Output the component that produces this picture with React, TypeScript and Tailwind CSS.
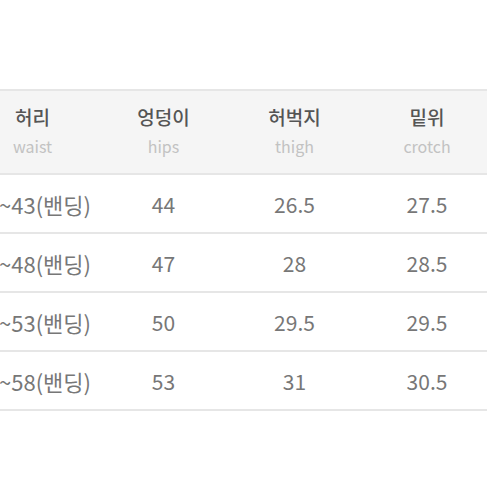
import React from "react";

const cols = [
  { ko: "허리", en: "waist" },
  { ko: "엉덩이", en: "hips" },
  { ko: "허벅지", en: "thigh" },
  { ko: "밑위", en: "crotch" },
];

const rows = [
  ["27~43(밴딩)", "44", "26.5", "27.5"],
  ["32~48(밴딩)", "47", "28", "28.5"],
  ["37~53(밴딩)", "50", "29.5", "29.5"],
  ["42~58(밴딩)", "53", "31", "30.5"],
];

export default function App() {
  return (
    <div
      className="w-[487px] h-[487px] overflow-hidden bg-white"
      style={{ fontFamily: '"Noto Sans CJK KR", "Noto Sans", sans-serif' }}
    >
      <div className="mt-[89px] ml-[-33px] w-[560px]">
        <div className="grid grid-cols-[131px_131px_131px_134px_33px] bg-[#f5f5f5] border-y-2 border-[#e6e6e6] h-[86px]">
          {cols.map((c) => (
            <div key={c.en} className="flex flex-col items-center pt-[12px]">
              <div className="text-[19px] leading-[28px] font-medium text-[#555555]">{c.ko}</div>
              <div className="mt-[4px] text-[16px] leading-[22px] text-[#c2c2c2]">{c.en}</div>
            </div>
          ))}
          <div />
        </div>
        {rows.map((r, i) => (
          <div
            key={i}
            className="grid grid-cols-[131px_131px_131px_134px_33px] h-[59px] border-b-2 border-[#e6e6e6] items-center"
          >
            {r.map((v, j) => (
              <div
                key={j}
                className={
                  j === 0
                    ? "text-right pr-[7px] whitespace-nowrap text-[22px] leading-[28px] text-[#777777]"
                    : "text-center text-[21px] leading-[28px] text-[#777777]"
                }
              >
                {v}
              </div>
            ))}
            <div />
          </div>
        ))}
      </div>
    </div>
  );
}
